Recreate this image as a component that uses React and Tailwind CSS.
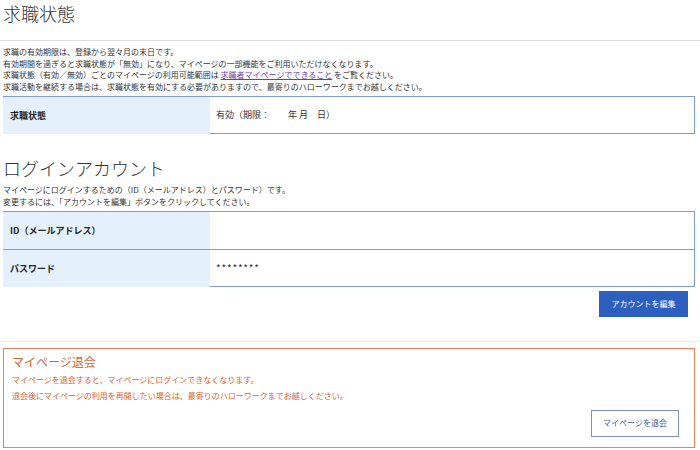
import React from 'react';

const font = { fontFamily: '"Noto Sans CJK JP", "Noto Sans", sans-serif' };

function Row({ label, value, last }) {
  return (
    <div className="flex h-[38px]">
      <div className="w-[207px] shrink-0 bg-[#e4f1fc] border-t border-[#7f9dd2] flex items-center pl-[7px] text-[9px] font-bold text-[#222]">
        {label}
      </div>
      <div
        className={
          'flex-1 border-t border-r border-[#7f9dd2] flex items-center pl-[6px] text-[9px] text-[#333] ' +
          (last ? 'border-b' : '')
        }
      >
        {value}
      </div>
    </div>
  );
}

export default function App() {
  return (
    <div className="w-[700px] h-[450px] bg-white overflow-hidden text-[#333]" style={font}>
      <h1 className="px-[3px] pt-[0px] text-[18px] leading-[26px] font-light text-[#333]">求職状態</h1>
      <div className="mt-[14px] border-t border-[#dcdcdc]" />

      <div className="px-[3px] mt-[5px] text-[8px] leading-[11.7px]">
        <p>求職の有効期限は、登録から翌々月の末日です。</p>
        <p>有効期間を過ぎると求職状態が「無効」になり、マイページの一部機能をご利用いただけなくなります。</p>
        <p>
          求職状態（有効／無効）ごとのマイページの利用可能範囲は{' '}
          <span className="text-[#6b3fa0] underline">求職者マイページでできること</span> をご覧ください。
        </p>
        <p>求職活動を継続する場合は、求職状態を有効にする必要がありますので、最寄りのハローワークまでお越しください。</p>
      </div>

      <div className="ml-[3px] w-[692px] mt-[3px]">
        <Row label="求職状態" value="有効（期限：　　年 月　日）" last />
      </div>

      <h2 className="px-[3px] mt-[21px] text-[18px] leading-[26px] font-light text-[#333]">ログインアカウント</h2>
      <div className="px-[3px] mt-[3px] text-[8px] leading-[12px]">
        <p>マイページにログインするための（ID（メールアドレス）とパスワード）です。</p>
        <p>変更するには、「アカウントを編集」ボタンをクリックしてください。</p>
      </div>

      <div className="ml-[3px] w-[692px] mt-[3px]">
        <Row label="ID（メールアドレス）" value="" />
        <Row label="パスワード" value={<span className="text-[10px] tracking-[0.8px]">********</span>} last />
      </div>

      <div className="flex justify-end pr-[12px] mt-[4px]">
        <button className="w-[89px] h-[26px] bg-[#2c5fbf] text-white text-[8px] flex items-center justify-center">
          アカウントを編集
        </button>
      </div>

      <div className="mt-[24px] border-t border-[#e3f1dc]" />

      <div className="ml-[3px] w-[692px] mt-[6px] h-[100px] border border-[#e5835a] px-[8px] pt-[4px]">
        <div className="text-[12px] leading-[18px] text-[#d8652e]">マイページ退会</div>
        <div className="text-[8px] leading-[16px] text-[#d8652e] mt-[1px]">
          <p>マイページを退会すると、マイページにログインできなくなります。</p>
          <p>退会後にマイページの利用を再開したい場合は、最寄りのハローワークまでお越しください。</p>
        </div>
        <div className="flex justify-end pr-[7px] mt-[6px]">
          <button className="w-[88px] h-[27px] bg-white border border-[#8091b8] text-[#3b5aa0] text-[8px] flex items-center justify-center">
            マイページを退会
          </button>
        </div>
      </div>
    </div>
  );
}
